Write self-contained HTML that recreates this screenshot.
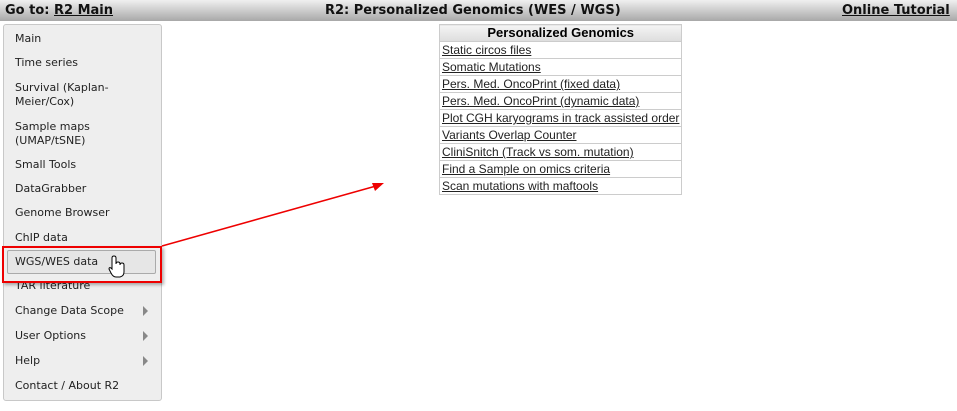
<!DOCTYPE html>
<html><head><style>
body{margin:0;width:957px;height:411px;background:#fff;position:relative;overflow:hidden;font-family:"DejaVu Sans",Verdana,sans-serif}
.hdr{position:absolute;left:0;top:0;width:957px;height:21px;background:linear-gradient(#f0f0f0,#a8a8a8);font-weight:bold;font-size:13px;color:#111}
.hdr span{position:absolute;top:3px}
.hdr u{text-decoration:underline}
.menu{position:absolute;left:3px;top:24px;width:157px;height:375px;background:#eeeeee;border:1px solid #c8c8c8;border-radius:3px}
.it{position:absolute;left:15px;font-size:11px;color:#222;line-height:14px}
.arr{position:absolute;left:143px;width:0;height:0;border-left:5px solid #888;border-top:5px solid transparent;border-bottom:5px solid transparent}
table{position:absolute;left:439px;top:24px;border-collapse:collapse;width:242px}
td,th{font-family:"Liberation Sans",Arial,sans-serif;white-space:nowrap}
td{border:1px solid #ccc;padding:0 2px;height:16px;line-height:16px;font-size:12px}
td a{color:#222;text-decoration:underline}
th{border:1px solid #ccc;background:linear-gradient(#f4f4f4,#ddd);font-size:13px;height:16px;line-height:16px;padding:0}
</style></head><body>
<div class="hdr"><span style="left:5px">Go to: <u>R2 Main</u></span><span style="left:325px">R2: Personalized Genomics (WES / WGS)</span><span style="left:842px"><u>Online Tutorial</u></span></div>
<div class="menu"></div>
<div class="it" style="top:32px">Main</div>
<div class="it" style="top:56px">Time series</div>
<div class="it" style="top:81px">Survival (Kaplan-<br>Meier/Cox)</div>
<div class="it" style="top:120px">Sample maps<br>(UMAP/tSNE)</div>
<div class="it" style="top:158px">Small Tools</div>
<div class="it" style="top:182px">DataGrabber</div>
<div class="it" style="top:206px">Genome Browser</div>
<div class="it" style="top:231px">ChIP data</div>
<div style="position:absolute;left:7px;top:250px;width:147px;height:22px;background:#e6e6e6;border:1px solid #aaa;border-radius:2px"></div>
<div class="it" style="top:255px">WGS/WES data</div>
<div class="it" style="top:279px">TAR literature</div>
<div class="it" style="top:304px">Change Data Scope</div>
<div class="it" style="top:329px">User Options</div>
<div class="it" style="top:354px">Help</div>
<div class="it" style="top:379px">Contact / About R2</div>
<div class="arr" style="top:306px"></div><div class="arr" style="top:331px"></div><div class="arr" style="top:356px"></div>
<div style="position:absolute;left:2px;top:246px;width:156px;height:33px;border:2px solid #e00;box-shadow:2px 2px 3px rgba(0,0,0,.3)"></div>
<svg style="position:absolute;left:0;top:0" width="957" height="411">
<line x1="162" y1="246" x2="376" y2="186" stroke="#e00" stroke-width="1.5"/>
<polygon points="384,183 372,183 375,191" fill="#e00"/>
<path d="M112 264 v-6 q0-2 2-2 q2 0 2 2 v6 q0-2 2-2 q2 0 2 2 v1 q0-2 2-2 q2 0 2 2 v7 q0 4-4 5 h-4 q-3 0-5-4 l-2-4 q0-2 2-1 l1 1z" fill="#fff" stroke="#000" stroke-width="1"/>
</svg>
<table>
<tr><th>Personalized Genomics</th></tr>
<tr><td><a>Static circos files</a></td></tr>
<tr><td><a>Somatic Mutations</a></td></tr>
<tr><td><a>Pers. Med. OncoPrint (fixed data)</a></td></tr>
<tr><td><a>Pers. Med. OncoPrint (dynamic data)</a></td></tr>
<tr><td><a>Plot CGH karyograms in track assisted order</a></td></tr>
<tr><td><a>Variants Overlap Counter</a></td></tr>
<tr><td><a>CliniSnitch (Track vs som. mutation)</a></td></tr>
<tr><td><a>Find a Sample on omics criteria</a></td></tr>
<tr><td><a>Scan mutations with maftools</a></td></tr>
</table>
</body></html>
